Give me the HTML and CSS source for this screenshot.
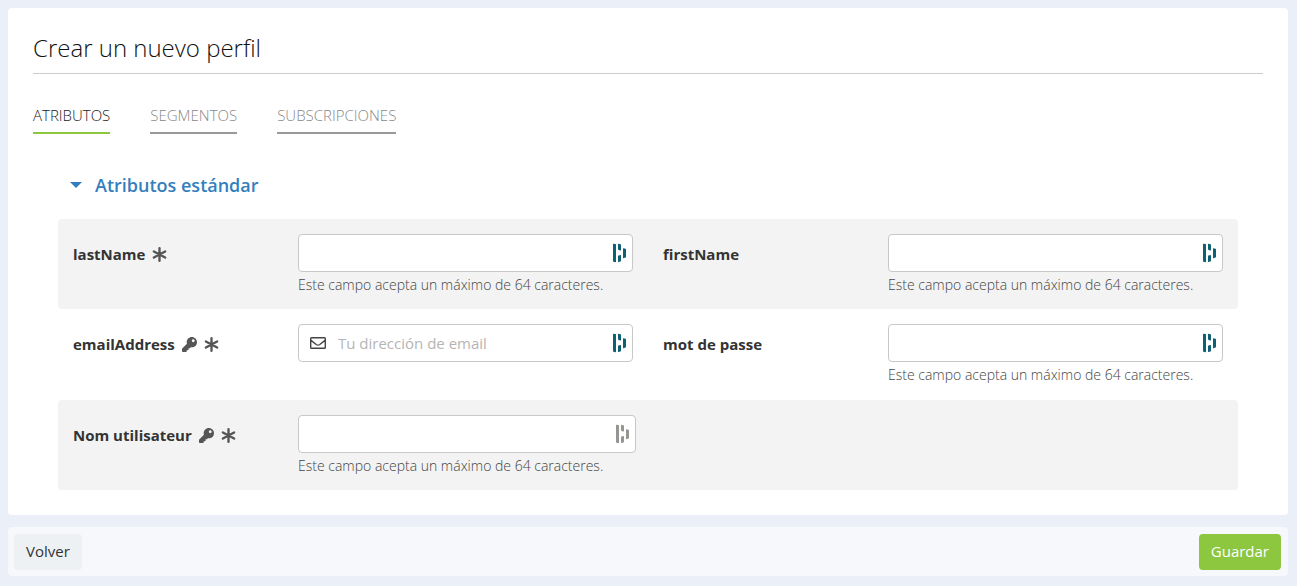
FILE: index.html
```html
<!DOCTYPE html>
<html lang="es">
<head>
<meta charset="utf-8">
<title>Crear un nuevo perfil</title>
<link rel="stylesheet" href="styles.css">
</head>
<body>
<svg class="sprite" aria-hidden="true">
  <symbol id="asterisk" viewBox="0 0 16 16"><path d="M8 1.300v13.400M2 4.700l12 6.600M14 4.700L2 11.300" fill="none" stroke="currentColor" stroke-width="2.500" stroke-linecap="round"/></symbol>
  <symbol id="key" viewBox="0 0 512 512"><path fill="currentColor" d="M512 176.001C512 273.203 433.202 352 336 352c-11.22 0-22.19-1.062-32.827-3.069l-24.012 27.014A23.999 23.999 0 0 1 261.223 384H224v40c0 13.255-10.745 24-24 24h-40v40c0 13.255-10.745 24-24 24H24c-13.255 0-24-10.745-24-24v-78.059c0-6.365 2.529-12.47 7.029-16.971l161.802-161.802C163.108 213.814 160 195.271 160 176 160 78.798 238.797.001 335.999 0 433.488-.001 512 78.511 512 176.001zM336 128c0 26.51 21.49 48 48 48s48-21.49 48-48-21.49-48-48-48-48 21.49-48 48z"/></symbol>
  <symbol id="envelope" viewBox="0 0 16 16"><path d="M1.500 2.800h13a.8.8 0 0 1 .8.8v8.800a.8.8 0 0 1-.8.8h-13a.8.8 0 0 1-.8-.8V3.600a.8.8 0 0 1 .8-.8zM1 5.400l5.200 4.100q1.800 1.300 3.600 0L15 5.400" fill="none" stroke="currentColor" stroke-width="1.400"/></symbol>
  <symbol id="vault" viewBox="0 0 14 20"><path fill="currentColor" d="M0 1.200Q0 .6.600.7L2.500 1.100Q3 1.200 3 1.800V18.600Q3 19.300 2.400 19.200L.5 18.800Q0 18.700 0 18.100zM5 1.200Q5 .6 5.600.8L7.500 1.300Q8 1.500 8 2.100V7Q8 7.600 7.400 7.400L5.500 6.900Q5 6.700 5 6.100zM5 13.100Q5 12.500 5.500 12.400L7.500 11.900Q8 11.800 8 12.400V17.500Q8 18.200 7.500 18.400L5.500 19.100Q5 19.300 5 18.700zM10 5.800Q10 5.200 10.600 5.300L12.500 5.800Q13 6 13 6.600V13.800Q13 14.400 12.500 14.600L10.500 15.200Q10 15.300 10 14.700z"/></symbol>
</svg>
<form class="page">
  <main class="card">
    <h1 class="title">Crear un nuevo perfil</h1>
    <nav class="tabs">
      <a class="tab tab-active" href="#atributos">ATRIBUTOS</a>
      <a class="tab" href="#segmentos">SEGMENTOS</a>
      <a class="tab" href="#subscripciones">SUBSCRIPCIONES</a>
    </nav>
    <section class="attributes" id="atributos">
      <h2 class="section-title"><button class="toggle" type="button" aria-expanded="true"><span class="caret"></span>Atributos estándar</button></h2>
      <div class="row shaded">
        <div class="field">
          <div class="label"><label for="last">lastName</label><svg class="icon"><use href="#asterisk"/></svg></div>
          <div class="control">
            <div class="box"><input class="input" id="last" type="text"><svg class="vault"><use href="#vault"/></svg></div>
            <p class="help">Este campo acepta un máximo de 64 caracteres.</p>
          </div>
        </div>
        <div class="field">
          <div class="label"><label for="first">firstName</label></div>
          <div class="control">
            <div class="box"><input class="input" id="first" type="text"><svg class="vault"><use href="#vault"/></svg></div>
            <p class="help">Este campo acepta un máximo de 64 caracteres.</p>
          </div>
        </div>
      </div>
      <div class="row row-plain">
        <div class="field">
          <div class="label"><label for="email">emailAddress</label><svg class="icon"><use href="#key"/></svg><svg class="icon"><use href="#asterisk"/></svg></div>
          <div class="control">
            <div class="box"><svg class="envelope"><use href="#envelope"/></svg><input class="input" id="email" type="email" placeholder="Tu dirección de email"><svg class="vault"><use href="#vault"/></svg></div>
          </div>
        </div>
        <div class="field">
          <div class="label"><label for="pass">mot de passe</label></div>
          <div class="control">
            <div class="box"><input class="input" id="pass" type="password"><svg class="vault"><use href="#vault"/></svg></div>
            <p class="help">Este campo acepta un máximo de 64 caracteres.</p>
          </div>
        </div>
      </div>
      <div class="row shaded">
        <div class="field field-wide">
          <div class="label"><label for="user">Nom utilisateur</label><svg class="icon"><use href="#key"/></svg><svg class="icon"><use href="#asterisk"/></svg></div>
          <div class="control">
            <div class="box"><input class="input" id="user" type="text"><svg class="vault vault-muted"><use href="#vault"/></svg></div>
            <p class="help">Este campo acepta un máximo de 64 caracteres.</p>
          </div>
        </div>
      </div>
    </section>
  </main>
  <footer class="actions">
    <button class="button" type="button">Volver</button>
    <button class="button button-primary" type="submit">Guardar</button>
  </footer>
</form>
</body>
</html>
```
FILE: styles.css
```css
* { box-sizing: border-box; }
body {
  margin: 0;
  background: #eaeff8;
  color: #333;
  font: 15px/20px "Open Sans", sans-serif;
}
.sprite { position: absolute; width: 0; height: 0; }
.page {
  display: flex;
  flex-direction: column;
  gap: 12px;
  padding: 8px 9px 10px 8px;
}
.card {
  padding: 24px 25px 25px;
  border-radius: 4px;
  background: #fff;
}
.title {
  margin: 0;
  padding-bottom: 9px;
  border-bottom: 1px solid #ccc;
  color: #111;
  font-size: 24px;
  line-height: 32px;
  font-weight: 300;
}
.tabs { display: flex; gap: 40px; padding-top: 30px; }
.tab {
  padding: 1px 0 7px;
  border-bottom: 2px solid #999;
  color: #888;
  font-weight: 300;
  text-decoration: none;
}
.tab-active { border-color: #8dc63f; color: #222; }
.attributes { padding: 39px 25px 0; }
.section-title { margin: 0 0 22px; font-size: 18px; line-height: 24px; }
.toggle {
  display: flex;
  align-items: center;
  gap: 13px;
  padding: 0 0 0 12px;
  border: 0;
  background: none;
  color: #337fbe;
  font: inherit;
  font-weight: 600;
}
.caret {
  border: 6px solid transparent;
  border-top: 6px solid #337fbe;
  border-bottom: 0;
}
.row {
  display: grid;
  grid-template-columns: 1fr 1fr;
  padding: 15px 0 14px;
  border-radius: 4px;
}
.row-plain { padding-bottom: 15px; }
.shaded { background: #f3f3f3; }
.field {
  display: grid;
  grid-template-columns: 225px 1fr;
  padding: 0 15px;
}
.field-wide { padding-right: 12px; }
.label {
  display: flex;
  align-items: center;
  gap: 7px;
  height: 40px;
  font-weight: 700;
}
.icon { width: 15px; height: 15px; color: #555; }
.box {
  display: flex;
  align-items: center;
  height: 38px;
  padding: 0 5px 0 11px;
  border: 1px solid #c8c8c8;
  border-radius: 4px;
  background: #fff;
}
.input {
  flex: 1;
  min-width: 0;
  padding: 0;
  border: 0;
  outline: 0;
  background: none;
  color: #333;
  font: inherit;
}
.input::placeholder { color: #b5b5b5; opacity: 1; }
.envelope { width: 16px; height: 16px; margin-right: 12px; color: #444; }
.vault { width: 14px; height: 20px; color: #0e6075; }
.vault-muted { color: #979592; }
.help {
  margin: 3px 0 0;
  color: #444;
  font-size: 14px;
  font-weight: 300;
}
.actions {
  display: flex;
  justify-content: space-between;
  padding: 7px 7px 6px 6px;
  border-radius: 4px;
  background: #f6f8fc;
}
.button {
  height: 36px;
  padding: 0 12px 2px;
  border: 0;
  border-radius: 4px;
  background: #edf1f4;
  color: #333;
  font: inherit;
}
.button-primary { background: #8dc63f; color: #fff; }
```
